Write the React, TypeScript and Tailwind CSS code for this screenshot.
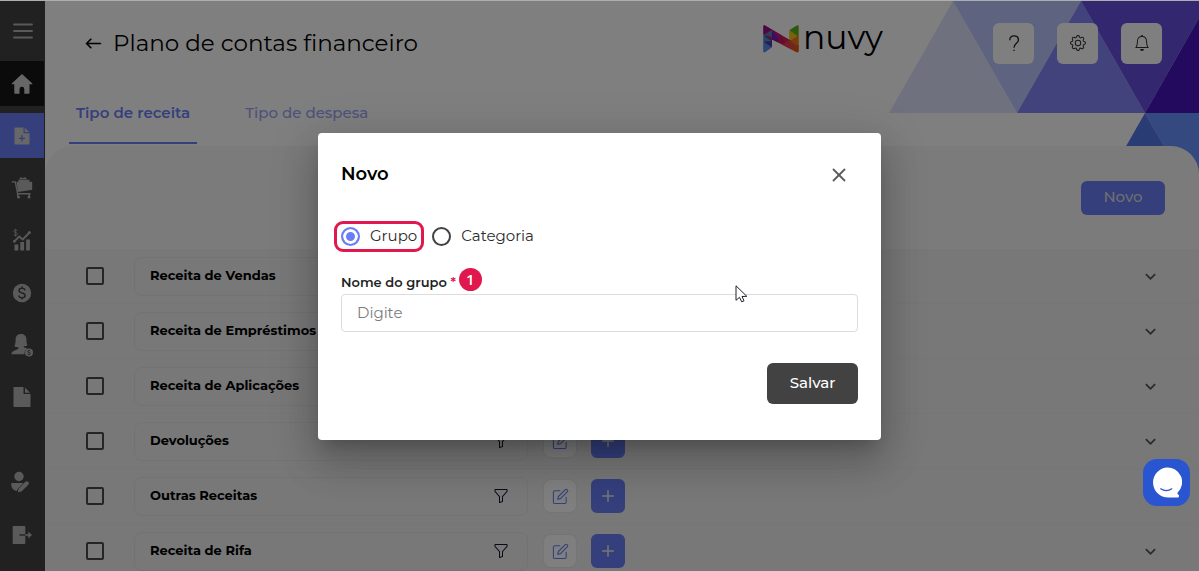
import React, { useState } from "react";
import { BsArrowLeft, BsBell, BsFunnel, BsGear } from "react-icons/bs";
import { MdKeyboardArrowDown } from "react-icons/md";
import { FiEdit } from "react-icons/fi";
import { Plus, X } from "lucide-react";

const groups = [
  "Receita de Vendas",
  "Receita de Empréstimos",
  "Receita de Aplicações",
  "Devoluções",
  "Outras Receitas",
  "Receita de Rifa",
];

const MenuIcon = () => (
  <svg width="20" height="18" viewBox="0 0 20 18" stroke="currentColor" strokeWidth="1.8" strokeLinecap="round">
    <path d="M1 2.5h18M1 9h18M1 15.5h18" />
  </svg>
);

const HomeIcon = () => (
  <svg width="22" height="22" viewBox="0 0 22 22" fill="currentColor">
    <path d="M11 1 1 10.2c-.5.5-.3 1 .4 1h1.9v8.6c0 .6.4 1 1 1h4.2v-4.6a2.4 2.4 0 0 1 4.8 0v4.6h4.2c.6 0 1-.4 1-1v-8.6h2.2c.7 0 .9-.5.4-1z" />
  </svg>
);

const NoteAddIcon = () => (
  <svg width="16" height="18" viewBox="0 0 16 18" fill="currentColor">
    <path
      fillRule="evenodd"
      d="M1 .5h8.5v5.7h6v10.6c0 .5-.3.8-.8.8H1.300c-.5 0-.8-.3-.8-.8V1c0-.3.2-.5.5-.5zM7.300 8v2.700H4.800v1.200h2.500v2.700h1.300v-2.700h2.500v-1.200H8.600V8z"
    />
    <path d="M10.700.700 15.300 5h-4.600z" />
  </svg>
);

const CartIcon = () => (
  <svg width="22" height="22" viewBox="0 0 22 22" fill="currentColor">
    <path d="M8.500 2.300 9 .6h2l.6 1 1-1h2.500l.5 1.700zM7.400 2.700h11v2h-11zM5.500 4.700H20.500c.4 0 .7.300.7.800v6.600c0 .7-.3 1-1 1L7 15z" />
    <path
      d="M.8 4.900h3.500l2.300 11.800H19.500M6.700 19.200v-2.500M18.300 19.200v-2.500"
      fill="none"
      stroke="currentColor"
      strokeWidth="1.400"
    />
    <circle cx="7.500" cy="20" r="1.500" />
    <circle cx="18" cy="20" r="1.500" />
  </svg>
);

const ChartIcon = () => (
  <svg width="20" height="24" viewBox="0 0 20 24" fill="currentColor">
    <path d="M2.500 16.500h3.800v6H2.500zM8.300 14h3.800v8.500H8.300zM14.100 11.500h3.800v11h-3.800z" />
    <path d="m2.200 13.500 5-5 3.500 3 6.800-7" fill="none" stroke="currentColor" strokeWidth="1.800" />
    <circle cx="2.300" cy="13.400" r="1.300" />
    <circle cx="17.400" cy="4.500" r="1.500" />
    <path
      d="M5.300 3c-.2-.8-.8-1.100-1.700-1.100-1 0-1.800.4-1.800 1.300C1.800 5.200 5.400 4 5.400 6.100c0 1-.8 1.400-1.800 1.400S1.800 7 1.700 6.200M3.600.8v7.800"
      fill="none"
      stroke="currentColor"
      strokeWidth=".8"
    />
  </svg>
);

const DollarIcon = () => (
  <svg width="20" height="20" viewBox="0 0 20 20">
    <circle cx="10" cy="10" r="9.200" fill="currentColor" />
    <path
      d="M13 7.300C12.700 6 11.600 5.300 10 5.300S7 6 7 7.500c0 3.300 6.100 1.500 6.100 4.900 0 1.500-1.300 2.300-3.100 2.300s-3-.8-3.200-2.200M10 3.600v2M10 14.500v2"
      fill="none"
      stroke="#424242"
      strokeWidth="1.500"
    />
  </svg>
);

const CustomerIcon = () => (
  <svg width="24" height="24" viewBox="0 0 24 24">
    <path
      fill="currentColor"
      d="M11 1C7.700 1 5.600 3.200 5.600 6.300c0 3-.3 5.200-1.200 7.100 1.300.8 2.800.9 4 .7v1.300c-1 1.700-6.400 1.400-7.200 5.900h13.400c-.6-2.700.8-5 3.100-5.600-2-.7-3.600-.8-3.900-1.600v-.9c1.200.2 2.700 0 3.600-.7-.8-2-.9-4.200-1-6.400C16.300 3 14.200 1 11 1z"
    />
    <circle cx="19" cy="19.500" r="4" fill="currentColor" />
    <path
      d="M20.300 18.200c-.2-.5-.7-.7-1.300-.7s-1.300.3-1.300.9c0 1.400 2.700.7 2.700 2.100 0 .7-.7 1-1.400 1s-1.300-.3-1.400-.9"
      fill="none"
      stroke="#424242"
      strokeWidth=".9"
    />
  </svg>
);

const FileIcon = () => (
  <svg width="18" height="20" viewBox="0 0 18 20" fill="currentColor">
    <path d="M.8 0h9.700v7h7v12.200c0 .5-.3.800-.8.800H1.300c-.5 0-.8-.3-.8-.8V.8c0-.4.1-.8.3-.8z" />
    <path d="M12 .6 17 5.800h-5z" />
  </svg>
);

const UserEditIcon = () => (
  <svg width="20" height="22" viewBox="0 0 20 22" fill="currentColor">
    <circle cx="9" cy="5.500" r="4.700" />
    <path d="M2 12h11.500L8 17.500c-.7.700-1 1.500-1 2.500-3.400-.5-5.500-2.500-5.800-6.500 0-.9.200-1.500.8-1.500z" />
    <path d="m8.500 17.800 6.600-6.700c1-1 2.400-1.100 3.200-.3s.8 2-.2 3.100l-6.600 6.600-3.700.7z" />
  </svg>
);

const ExitIcon = () => (
  <svg width="20" height="20" viewBox="0 0 20 20">
    <path
      fill="currentColor"
      d="M1.500 1h11c.5 0 .8.300.8.800v16.400c0 .5-.3.800-.8.800h-11c-.5 0-.8-.3-.8-.8V1.800c0-.5.300-.8.800-.8z"
    />
    <path d="M7.500 10h5.800" stroke="#424242" strokeWidth="1.400" />
    <path fill="currentColor" d="M13.300 9.300h3V6.700L20 10l-3.700 3.400v-2.700h-3z" />
  </svg>
);

const LogoMark = () => (
  <svg width="36" height="28" viewBox="0 0 36 28">
    {/* left bar */}
    <path fill="#5a62d8" d="M.5 1.500 9 5v17L2 27c-1 .5-1.500.2-1.500-.7z" />
    <path fill="#5d8de8" d="m.5 17 8 5.500L2 27c-1 .5-1.500.2-1.500-.7z" />
    <path fill="#4a3fae" d="m9 10.500-8.500 6L9 22z" />
    <path fill="#5490bd" d="M9 5.500.5 11v5.500L9 16z" />
    <path fill="#3c4c96" d="m.5 10.500 8.500 6v-6z" />
    {/* right bar */}
    <path fill="#dba51a" d="M26.500 5.500 35.500.500v20h-9z" />
    <path fill="#57b41c" d="M26.500 5 33.800.600c1-.5 1.700-.2 1.700.8v10z" />
    <path fill="#f0c911" d="m26.500 5.500 8 5.700-8 5z" />
    {/* diagonal */}
    <path fill="#d81e63" d="M2 .5 35.500 20v6c0 1.300-.7 1.600-2 1L9 14.500.5 9V1.500C.5.300 1 0 2 .5z" />
    <path fill="#96108a" d="M2 .5 9 4.700.5 10V1.500C.5.300 1 0 2 .5z" />
    <path fill="#5a7cc0" d="M9 5v6.500L.5 10z" />
    <path fill="#6d22b4" d="m9 4.700 7 9.300-1.500 3L9 14.500z" />
    <path fill="#b8149a" d="m9 4.700 8.500 5-2 6z" />
    <path fill="#c41a4c" d="m17.500 9.700 6 10.500-8.500-4z" />
    <path fill="#e63c50" d="m26.500 15-7.500 4.500 7.500 4z" />
    <path fill="#e84e40" d="M26.500 14.700 35.500 20l-9 4z" />
    <path fill="#f07a14" d="m35.500 10.500-8 5.500 8 6z" />
    <path fill="#e8590f" d="M35.500 20v6c0 1.300-.7 1.600-2 1l-6-3.200z" />
  </svg>
);

const Backdrop = () => (
  <svg className="absolute right-0 top-0" width="310" height="212" viewBox="0 0 310 212">
    <path fill="#dfe3ff" d="M64 0 128 112H0z" />
    <path fill="#bdc7ff" d="M64 0h128l-64 112z" />
    <path fill="#8484fa" d="m192 0 64 112H128z" />
    <path fill="#6650de" d="M192 0h118v17l-54 95z" />
    <path fill="#4814be" d="m310 17-54 95h54z" />
    <path fill="#5278e8" d="m256 112 57 100H199z" />
    <path fill="#6692ff" d="M256 112h54v96z" />
  </svg>
);

const ChatIcon = () => (
  <svg width="31" height="33" viewBox="0 0 32 34">
    <path
      fill="#fff"
      d="M16 1.500a15 15 0 1 0 3.500 31h8.300c1.200-.1 1.700-2.500.3-3-.9-.4-1-1.300-.5-2.300A15 15 0 0 0 16 1.500z"
    />
    <path d="M10 23.500c3.500 2.400 8 2.400 11.500 0" fill="none" stroke="#2a55d0" strokeWidth="1.300" strokeLinecap="round" />
  </svg>
);

const sideItems = [
  { label: "Início", icon: <HomeIcon />, style: "bg-[#161616] text-[#cfcfcf]" },
  { label: "Cadastros", icon: <NoteAddIcon />, style: "bg-[#697ef8] text-[#cfcfcf]" },
  { label: "Vendas", icon: <CartIcon />, style: "text-[#b4b4b4]" },
  { label: "Financeiro", icon: <ChartIcon />, style: "text-[#b4b4b4]" },
  { label: "Cobranças", icon: <DollarIcon />, style: "text-[#b4b4b4]" },
  { label: "Clientes", icon: <CustomerIcon />, style: "text-[#b4b4b4]" },
  { label: "Relatórios", icon: <FileIcon />, style: "text-[#b4b4b4]" },
];

const Sidebar: React.FC = () => (
  <aside className="flex w-[45px] shrink-0 flex-col bg-[#424242] text-[#b4b4b4]">
    <button aria-label="Menu" className="flex h-[60px] shrink-0 items-center justify-center pb-px">
      <MenuIcon />
    </button>
    <nav className="flex h-[359px] shrink-0 flex-col justify-between">
      {sideItems.map((item) => (
        <a
          key={item.label}
          href="#"
          aria-label={item.label}
          className={`flex h-[45px] w-11 items-center justify-center ${item.style}`}
        >
          {item.icon}
        </a>
      ))}
    </nav>
    <div className="mt-auto flex flex-col gap-2 pb-[14px]">
      <a href="#" aria-label="Perfil" className="flex h-[45px] w-10 items-center justify-center">
        <UserEditIcon />
      </a>
      <a href="#" aria-label="Sair" className="flex h-[45px] w-11 items-center justify-center">
        <ExitIcon />
      </a>
    </div>
  </aside>
);

const Header: React.FC = () => (
  <header className="flex h-[84px] shrink-0 items-center pl-10 pr-[37px]">
    <a href="#" aria-label="Voltar">
      <BsArrowLeft size={17} strokeWidth={0.5} />
    </a>
    <h1 className="ml-[11px] text-[23px] leading-8 text-black">Plano de contas financeiro</h1>
    <div className="ml-auto mr-[110px] flex h-10 items-center gap-1 pb-2">
      <LogoMark />
      <span className="pb-1 text-[33px] font-normal leading-8 text-black">nuvy</span>
    </div>
    <div className="flex gap-[23px]">
      <button aria-label="Ajuda" className="flex size-[41px] items-center justify-center rounded-md bg-white">
        <svg width="12" height="17" viewBox="0 0 12 18" fill="none" stroke="#222" strokeWidth="1.400">
          <path d="M1.500 5.500C1.500 2.500 3.300 1 6 1s4.700 1.600 4.700 4.300C10.700 9 6 8.800 6 13.500" />
          <path d="M6 15.500v1.500" />
        </svg>
      </button>
      <button aria-label="Configurações" className="flex size-[41px] items-center justify-center rounded-md bg-white">
        <BsGear size={16} color="#333" />
      </button>
      <button aria-label="Notificações" className="flex size-[41px] items-center justify-center rounded-md bg-white">
        <BsBell size={16} color="#333" />
      </button>
    </div>
  </header>
);

const GroupRow: React.FC<{ name: string }> = ({ name }) => (
  <li className="flex h-[55px] shrink-0 items-center border-b border-[#ececec] pl-[41px] pr-[38px]">
    <input
      type="checkbox"
      aria-label={name}
      className="size-[18px] shrink-0 appearance-none rounded-[2px] border-2 border-[#4a4a4a]"
    />
    <div className="ml-[30px] flex h-[39px] w-[394px] shrink-0 items-center justify-between rounded-lg border border-[#e6e6e6] pl-[15px] pr-[18px]">
      <span className="text-[13px] font-bold text-black">{name}</span>
      <BsFunnel size={16} color="#1c1230" />
    </div>
    <button
      aria-label="Editar"
      className="ml-[15px] flex size-[34px] items-center justify-center rounded-lg border border-[#e8e8e8] bg-white text-[#697ef8]"
    >
      <FiEdit size={17} strokeWidth={1.5} />
    </button>
    <button
      aria-label="Adicionar"
      className="ml-[14px] flex size-[34px] items-center justify-center rounded-md bg-[#697ef8] text-[#eeeeee]"
    >
      <Plus size={18} strokeWidth={2} />
    </button>
    <button aria-label="Expandir" className="ml-auto text-[#555]">
      <MdKeyboardArrowDown size={21} />
    </button>
  </li>
);

interface NewGroupModalProps {
  kind: string;
  onKindChange: (kind: string) => void;
}

const NewGroupModal: React.FC<NewGroupModalProps> = ({ kind, onKindChange }) => {
  const radioStyle =
    "size-[19px] appearance-none rounded-full border-2 border-[#424242] checked:border-[#697ef8] checked:bg-[#697ef8] checked:shadow-[inset_0_0_0_3px_white]";

  return (
    <div
      role="dialog"
      aria-labelledby="modal-title"
      className="relative w-full max-w-[563px] rounded bg-white px-[23px] pb-9 pt-[30px] shadow-[0_11px_15px_-7px_rgba(0,0,0,0.2),0_24px_38px_3px_rgba(0,0,0,0.14),0_9px_46px_8px_rgba(0,0,0,0.12)]"
    >
      <div className="flex h-6 items-center justify-between pr-2">
        <h2 id="modal-title" className="text-[18px] font-semibold text-black">
          Novo
        </h2>
        <button aria-label="Fechar" className="text-[#5c5c5c]">
          <X size={22} strokeWidth={2} />
        </button>
      </div>

      <div className="mt-[37px] flex h-[26px] items-center gap-[15px] text-[15px] text-[#2b2b2b]">
        <label className="relative flex items-center gap-[10px]">
          <input
            type="radio"
            name="kind"
            className={radioStyle}
            checked={kind === "grupo"}
            onChange={() => onKindChange("grupo")}
          />
          Grupo
          <span className="absolute -inset-x-[7px] -inset-y-1 rounded-[9px] border-3 border-[#e0184d]" />
        </label>
        <label className="flex items-center gap-[10px]">
          <input
            type="radio"
            name="kind"
            className={radioStyle}
            checked={kind === "categoria"}
            onChange={() => onKindChange("categoria")}
          />
          Categoria
        </label>
      </div>

      <div className="mt-[23px] flex h-[21px] items-center gap-[3px] text-[13px] font-semibold text-[#1f1f1f]">
        <label htmlFor="group-name">
          Nome do grupo <span className="text-[#e0184d]">*</span>
        </label>
        <span className="mb-2 flex size-[23px] items-center justify-center rounded-full bg-[#e0184d] font-['Open_Sans'] text-[15px] text-white">
          1
        </span>
      </div>
      <input
        id="group-name"
        type="text"
        placeholder="Digite"
        className="h-[38px] w-full rounded border border-[#dcdcdc] px-[15px] text-[15px] placeholder:text-[#7b7b7b]"
      />
      <div className="mt-[31px] flex justify-end">
        <button className="h-[41px] w-[91px] rounded-md bg-[#424242] text-[15px] font-medium text-white">Salvar</button>
      </div>

      {/* mouse pointer */}
      <svg className="absolute left-[417px] top-[152px]" width="13" height="18" viewBox="0 0 13 18">
        <path
          d="M1 .8v14.500l3.500-3 2.200 4.500 2.300-1-2-4.300 4.800-.2z"
          fill="#fff"
          stroke="#1f1f2b"
          strokeWidth="1"
        />
      </svg>
    </div>
  );
};

const App: React.FC = () => {
  const [kind, setKind] = useState("grupo");

  return (
    <div className="flex h-screen flex-col overflow-hidden bg-white font-['Montserrat','Inter',sans-serif]">
      <div className="h-px shrink-0 bg-[#aab0b0]" />
      <div className="relative flex min-h-0 flex-1">
        <Sidebar />

        <div className="relative flex min-w-0 flex-1 flex-col overflow-hidden">
          <Backdrop />
          <div className="relative flex min-h-0 flex-1 flex-col">
            <Header />
            <div className="ml-6 flex shrink-0 gap-10 pb-px text-[15px]">
              <button className="flex h-[59px] items-center border-b-2 border-[#697ef8] px-[7px] font-semibold text-[#697ef8]">
                Tipo de receita
              </button>
              <button className="flex h-[59px] items-center px-2 pb-[2px] font-medium text-[#99a5f5]">
                Tipo de despesa
              </button>
            </div>

            <main className="mt-px flex flex-1 flex-col overflow-hidden rounded-t-[28px] bg-[#f7f7f7]">
              <div className="flex h-[103px] shrink-0 items-center justify-end pr-[34px]">
                <button className="h-[34px] w-[84px] rounded-md bg-[#697ef8] text-[15px] font-medium text-[#dddddd]">
                  Novo
                </button>
              </div>
              <ul className="bg-[#f0f0f0]">
                {groups.map((name) => (
                  <GroupRow key={name} name={name} />
                ))}
              </ul>
            </main>
          </div>
        </div>

        {/* Modal over the dimmed page */}
        <div className="absolute inset-0 flex items-center justify-center bg-black/50">
          <NewGroupModal kind={kind} onKindChange={setKind} />
        </div>

        <button
          aria-label="Chat"
          className="absolute bottom-[65px] right-[9px] flex size-[47px] items-center justify-center rounded-[14px] bg-[#2a55d0]"
        >
          <ChatIcon />
        </button>
      </div>
    </div>
  );
};

export default App;
